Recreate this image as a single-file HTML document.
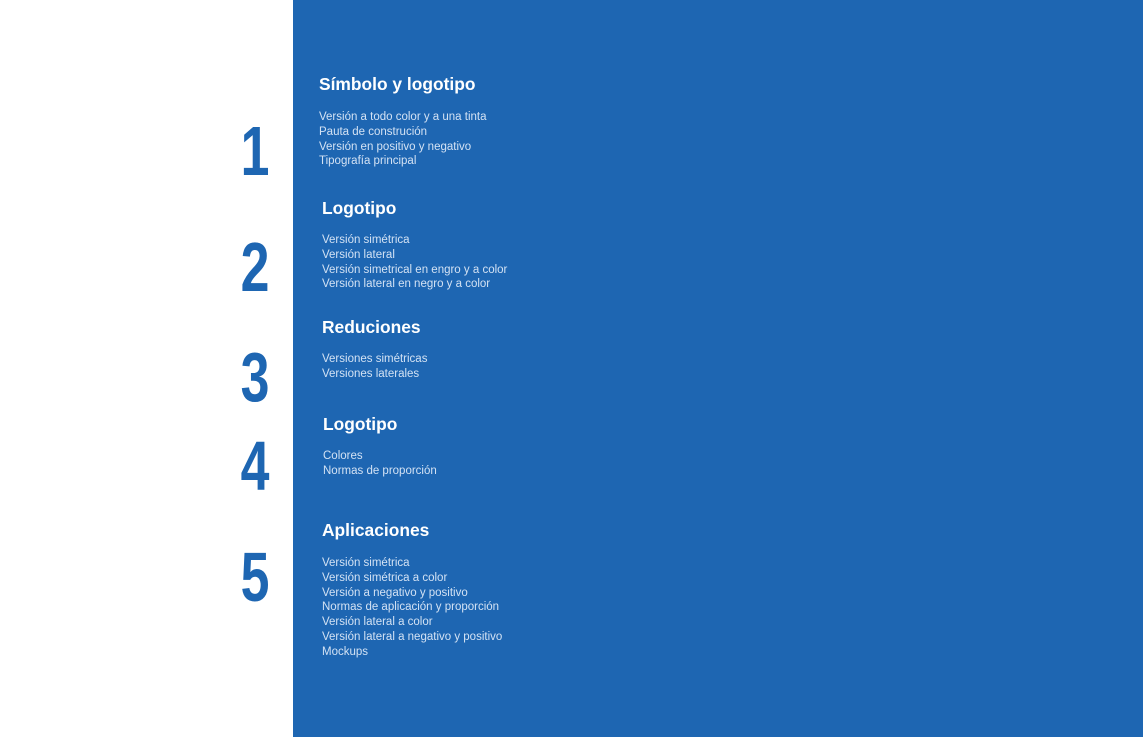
<!DOCTYPE html>
<html><head><meta charset="utf-8"><style>
body{margin:0;width:1143px;height:737px;background:#fff;position:relative;overflow:hidden;font-family:"Liberation Sans",sans-serif}
.blue{position:absolute;left:293px;top:0;width:850px;height:737px;background:#1e66b2}
.n{position:absolute;left:235px;width:40px;text-align:center;color:#1e66b2;font-weight:bold;font-size:70px;line-height:70px;transform:scaleX(0.74);transform-origin:center}
.h{position:absolute;color:#fff;font-weight:bold;font-size:17.4px;line-height:20px}
.l{position:absolute;color:#d3e2f4;font-size:11.5px;line-height:14.8px}
</style></head><body>
<div class="blue"></div>
<div class="n" style="top:116px">1</div>
<div class="n" style="top:232px">2</div>
<div class="n" style="top:342px">3</div>
<div class="n" style="top:431px">4</div>
<div class="n" style="top:542px">5</div>

<div class="h" style="left:319px;top:74px">Símbolo y logotipo</div>
<div class="l" style="left:319px;top:110px">Versión a todo color y a una tinta<br>Pauta de construción<br>Versión en positivo y negativo<br>Tipografía principal</div>

<div class="h" style="left:322px;top:198px">Logotipo</div>
<div class="l" style="left:322px;top:233px">Versión simétrica<br>Versión lateral<br>Versión simetrical en engro y a color<br>Versión lateral en negro y a color</div>

<div class="h" style="left:322px;top:317px">Reduciones</div>
<div class="l" style="left:322px;top:352px">Versiones simétricas<br>Versiones laterales</div>

<div class="h" style="left:323px;top:414px">Logotipo</div>
<div class="l" style="left:323px;top:449px">Colores<br>Normas de proporción</div>

<div class="h" style="left:322px;top:520px">Aplicaciones</div>
<div class="l" style="left:322px;top:556px">Versión simétrica<br>Versión simétrica a color<br>Versión a negativo y positivo<br>Normas de aplicación y proporción<br>Versión lateral a color<br>Versión lateral a negativo y positivo<br>Mockups</div>
</body></html>
